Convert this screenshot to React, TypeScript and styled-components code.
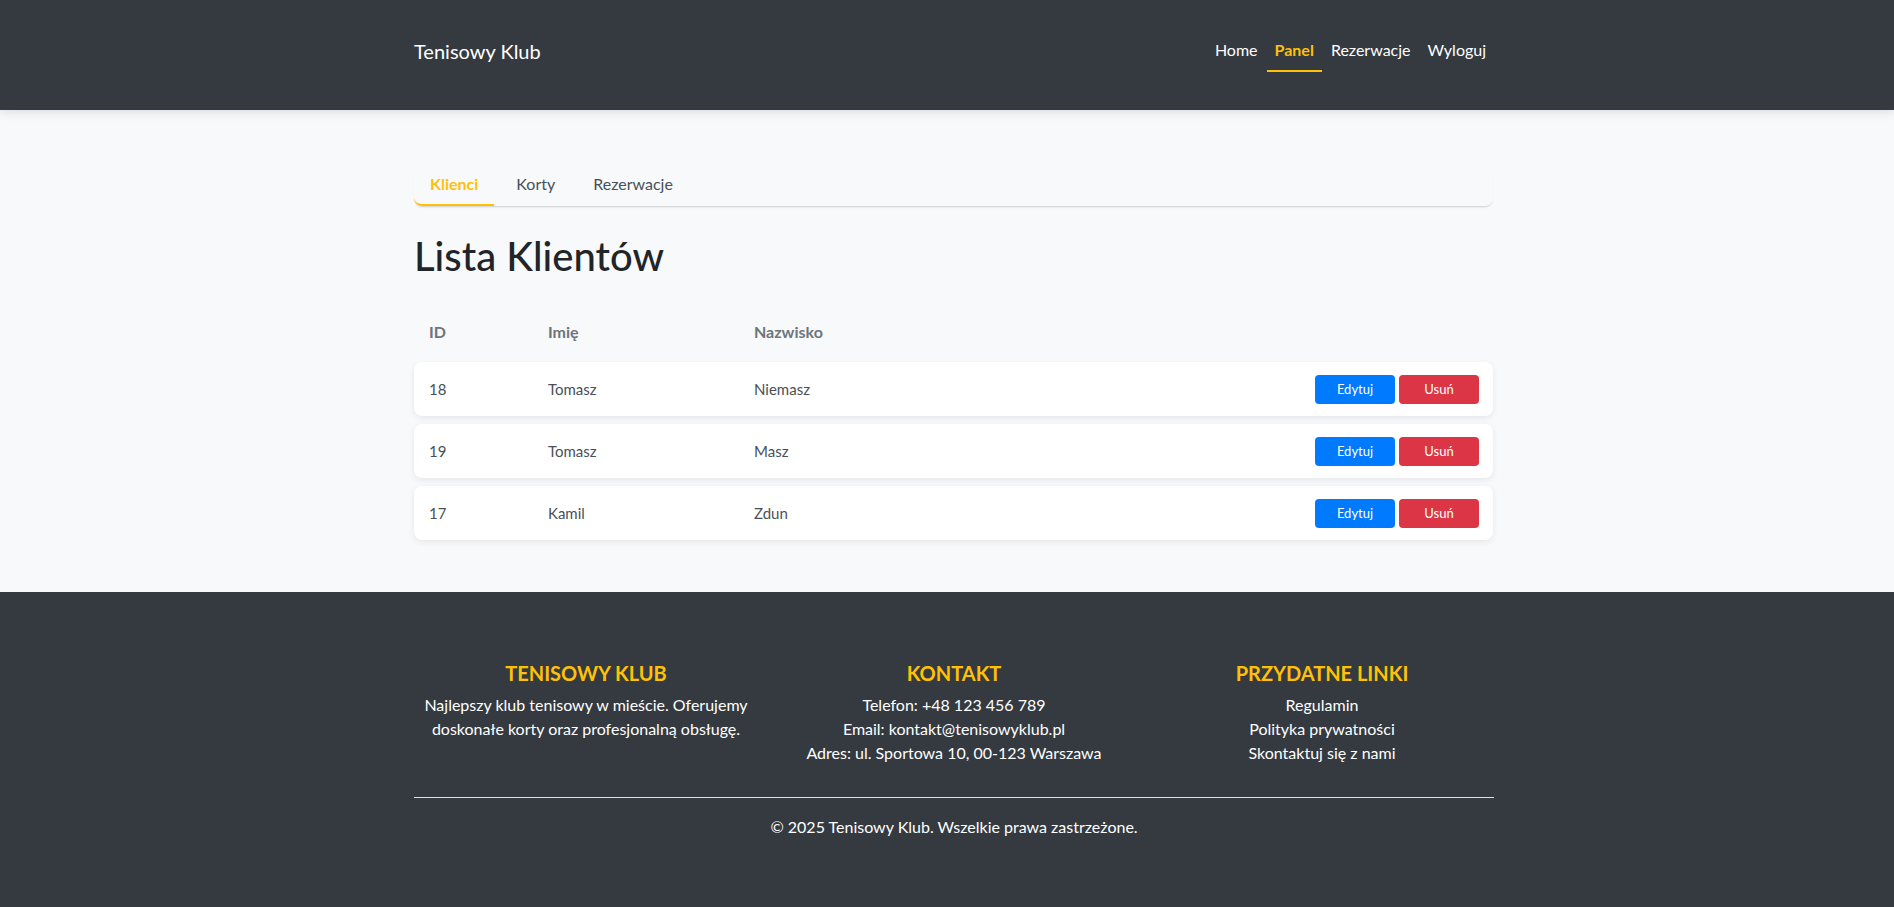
import React, { useState } from "react";
import styled, { createGlobalStyle } from "styled-components";

const GlobalStyle = createGlobalStyle`
  body {
    margin: 0;
    background-color: #f8f9fa;
    font-family: Lato, "Noto Sans", sans-serif;
    color: #212529;
  }
  * {
    box-sizing: border-box;
  }
`;

const Container = styled.div`
  width: 1094px;
  margin: 0 auto;
  padding-left: 14px;
`;

const Header = styled.header`
  background-color: #343a40;
  height: 110px;
  box-shadow: 0 2px 10px rgba(0, 0, 0, 0.12);
  position: relative;
  z-index: 1;
`;

const HeaderInner = styled(Container)`
  display: flex;
  align-items: center;
  justify-content: space-between;
  height: 100%;
  padding-bottom: 8px;
`;

const Brand = styled.div`
  color: #fff;
  font-size: 20px;
  line-height: 30px;
`;

const Nav = styled.nav`
  display: flex;
  gap: 1px;
`;

const NavLink = styled.a<{ $active?: boolean }>`
  color: ${(p) => (p.$active ? "#ffc107" : "#fff")};
  font-weight: ${(p) => (p.$active ? 700 : 400)};
  font-size: 16px;
  line-height: 24px;
  padding: 8px 8px;
  border-bottom: 2px solid ${(p) => (p.$active ? "#ffc107" : "transparent")};
  cursor: pointer;
`;

const Main = styled.main`
  padding: 54px 0 52px;
`;

const Tabs = styled.div`
  display: flex;
  gap: 6px;
  border-radius: 8px;
  background-color: #f8f9fa;
  box-shadow: 0 2px 2px -1px rgba(0, 0, 0, 0.18);
  margin-right: 1px;
`;

const Tab = styled.div<{ $active?: boolean }>`
  padding: 8px 16px;
  font-size: 16px;
  line-height: 24px;
  color: ${(p) => (p.$active ? "#ffc107" : "#495057")};
  font-weight: ${(p) => (p.$active ? 700 : 400)};
  border-bottom: 2px solid ${(p) => (p.$active ? "#ffc107" : "transparent")};
  border-radius: 0 0 0 8px;
  cursor: pointer;
`;

const Title = styled.h1`
  font-size: 40px;
  font-weight: 500;
  line-height: 48px;
  margin: 26px 0 27px;
  color: #212529;
`;

const Grid = `
  display: grid;
  grid-template-columns: 119px 206px 1fr auto;
  align-items: center;
  padding: 0 14px 0 15px;
`;

const HeadRow = styled.div`
  ${Grid}
  height: 48px;
  margin-bottom: 7px;
  font-weight: 700;
  font-size: 16px;
  color: #6c757d;
`;

const Rows = styled.div`
  display: flex;
  flex-direction: column;
  gap: 8px;
`;

const Row = styled.div`
  ${Grid}
  height: 54px;
  background-color: #fff;
  border-radius: 8px;
  box-shadow: 0 2px 6px rgba(0, 0, 0, 0.08);
  font-size: 15px;
  color: #495057;
  margin-right: 1px;
`;

const Actions = styled.div`
  display: flex;
  gap: 4px;
`;

const Button = styled.button<{ $variant: "edit" | "delete" }>`
  width: 80px;
  height: 29px;
  border: none;
  border-radius: 4px;
  font-family: inherit;
  font-size: 13px;
  color: #fff;
  cursor: pointer;
  background-color: ${(p) => (p.$variant === "edit" ? "#007bff" : "#dc3545")};
`;

const Footer = styled.footer`
  background-color: #343a40;
  color: #fff;
  padding: 69px 0 80px;
`;

const FooterCols = styled.div`
  display: grid;
  grid-template-columns: repeat(3, 1fr);
  margin: 0 -12px;
`;

const FooterCol = styled.div`
  padding: 0 12px;
  text-align: center;
  font-size: 16px;
  line-height: 24px;
  p {
    margin: 0;
  }
`;

const FooterTitle = styled.h5`
  color: #ffc107;
  font-size: 20px;
  font-weight: 700;
  line-height: 24px;
  margin: 0 0 8px;
  text-transform: uppercase;
`;

const Divider = styled.hr`
  border: none;
  border-top: 1px solid #dee2e6;
  margin: 32px 0 17px;
`;

const Copy = styled.p`
  text-align: center;
  margin: 0;
  font-size: 16px;
  line-height: 24px;
`;

const clients = [
  { id: 18, name: "Tomasz", surname: "Niemasz" },
  { id: 19, name: "Tomasz", surname: "Masz" },
  { id: 17, name: "Kamil", surname: "Zdun" },
];

const App = () => {
  const [tab, setTab] = useState("Klienci");
  return (
    <>
      <GlobalStyle />
      <Header>
        <HeaderInner>
          <Brand>Tenisowy Klub</Brand>
          <Nav>
            <NavLink>Home</NavLink>
            <NavLink $active>Panel</NavLink>
            <NavLink>Rezerwacje</NavLink>
            <NavLink>Wyloguj</NavLink>
          </Nav>
        </HeaderInner>
      </Header>
      <Main>
        <Container>
          <Tabs>
            {["Klienci", "Korty", "Rezerwacje"].map((t) => (
              <Tab key={t} $active={tab === t} onClick={() => setTab(t)}>
                {t}
              </Tab>
            ))}
          </Tabs>
          <Title>Lista Klientów</Title>
          <HeadRow>
            <span>ID</span>
            <span>Imię</span>
            <span>Nazwisko</span>
            <span />
          </HeadRow>
          <Rows>
            {clients.map((c) => (
              <Row key={c.id}>
                <span>{c.id}</span>
                <span>{c.name}</span>
                <span>{c.surname}</span>
                <Actions>
                  <Button $variant="edit">Edytuj</Button>
                  <Button $variant="delete">Usuń</Button>
                </Actions>
              </Row>
            ))}
          </Rows>
        </Container>
      </Main>
      <Footer>
        <Container>
          <FooterCols>
            <FooterCol>
              <FooterTitle>Tenisowy Klub</FooterTitle>
              <p>
                Najlepszy klub tenisowy w mieście. Oferujemy doskonałe korty
                oraz profesjonalną obsługę.
              </p>
            </FooterCol>
            <FooterCol>
              <FooterTitle>Kontakt</FooterTitle>
              <p>Telefon: +48 123 456 789</p>
              <p>Email: kontakt@tenisowyklub.pl</p>
              <p>Adres: ul. Sportowa 10, 00-123 Warszawa</p>
            </FooterCol>
            <FooterCol>
              <FooterTitle>Przydatne Linki</FooterTitle>
              <p>Regulamin</p>
              <p>Polityka prywatności</p>
              <p>Skontaktuj się z nami</p>
            </FooterCol>
          </FooterCols>
          <Divider />
          <Copy>© 2025 Tenisowy Klub. Wszelkie prawa zastrzeżone.</Copy>
        </Container>
      </Footer>
    </>
  );
};

export default App;
